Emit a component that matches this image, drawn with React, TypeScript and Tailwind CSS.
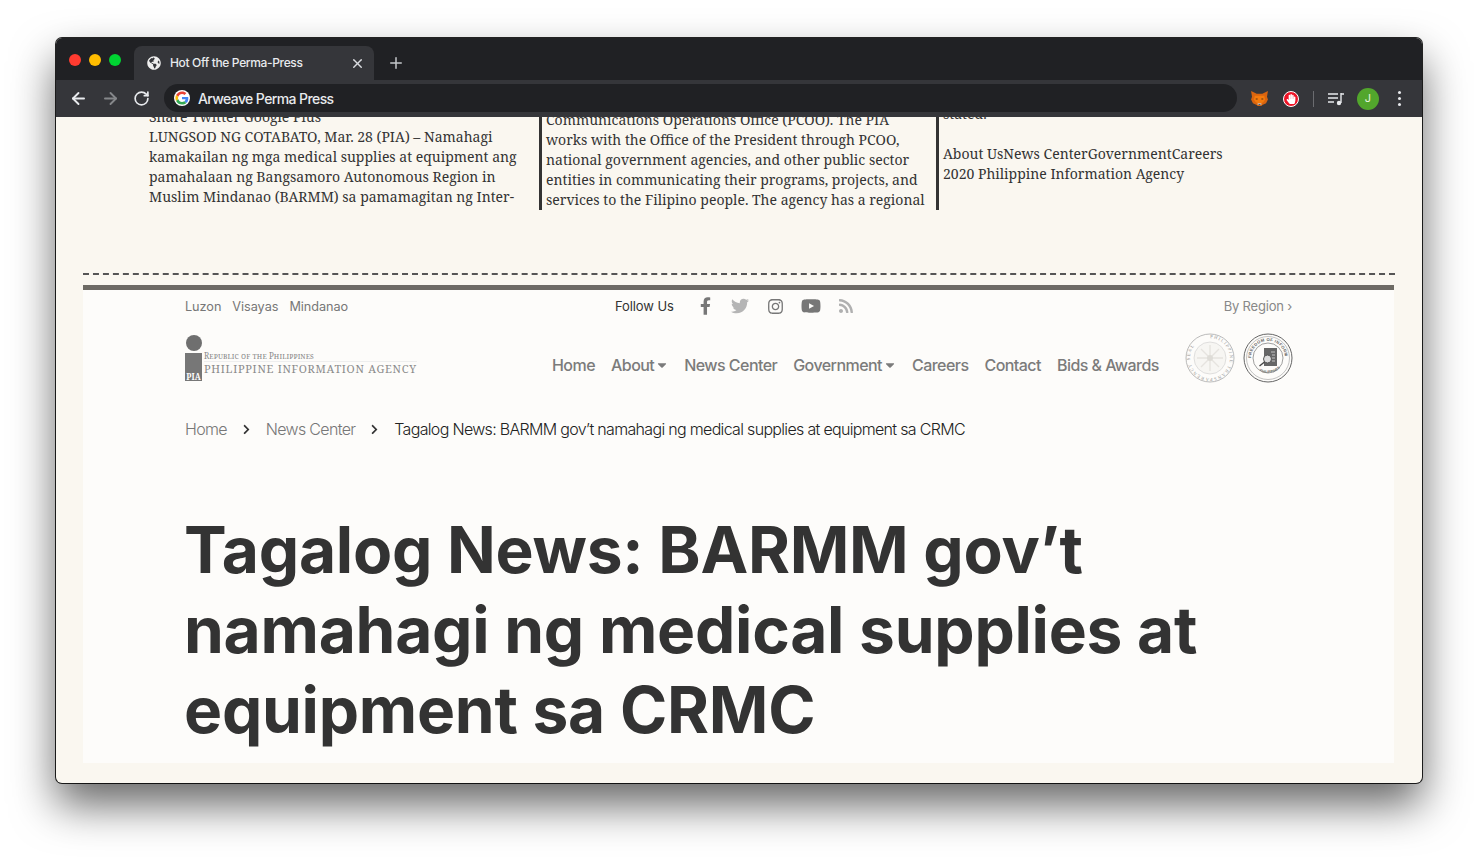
import { FaFacebookF, FaTwitter, FaInstagram, FaYoutube, FaRss, FaGlobeAmericas, FaHandPaper, FaCaretDown, FaChevronRight } from "react-icons/fa";
import { ArrowLeft, ArrowRight, RotateCw, X, Plus } from "lucide-react";

const serif = "[font-family:'Noto_Serif','Liberation_Serif','DejaVu_Serif',serif]";

const GoogleG = () => (
  <svg viewBox="0 0 48 48" className="w-[16px] h-[16px]">
    <circle cx="24" cy="24" r="24" fill="#fff" />
    <path fill="#EA4335" d="M24 12c3.1 0 5.6 1.1 7.6 2.9l5.6-5.6C33.7 6.100 29.300 4.200 24 4.200 16.300 4.200 9.600 8.600 6.300 15.100l6.600 5.100C14.500 15.400 18.900 12 24 12z" />
    <path fill="#4285F4" d="M43 24.500c0-1.400-.1-2.400-.4-3.500H24v7.100h10.800c-.5 2.500-1.900 4.600-4.100 6l6.400 5C40.800 36.300 43 30.900 43 24.500z" />
    <path fill="#FBBC05" d="M12.900 28.800c-.4-1.300-.7-2.700-.7-4.100 0-1.400.2-2.900.7-4.500l-6.600-5.100C4.900 18 4.200 21 4.200 24s.7 6 2.100 8.900l6.600-5.100z" />
    <path fill="#34A853" d="M24 43.800c5.300 0 9.800-1.700 13-4.700l-6.400-5c-1.700 1.200-4 2-6.600 2-5.100 0-9.500-3.400-11.100-8.300l-6.600 5.100C9.600 39.400 16.300 43.800 24 43.800z" />
  </svg>
);

const Fox = () => (
  <svg viewBox="0 0 18 16" className="w-[17px] h-[15px]">
    <path fill="#d9640f" d="M0 0l6 3h6l6-3-1 6 1 3-2 4-4 2-1 1H7l-1-1-4-2-2-4 1-3z" />
    <path fill="#f47a0c" d="M4 5h10l1 4-2 3-4 2-4-2-2-3z" />
    <path fill="#5e3413" d="M5 8h2v1H5zM11 8h2v1h-2z" />
    <path fill="#cdbfb2" d="M7 13h4v2H7z" />
    <path fill="#233447" d="M8 14h2v1H8z" />
  </svg>
);

const Logo = () => (
  <div className="flex items-end">
    <div className="w-[17px] flex flex-col items-center">
      <div className="w-[16px] h-[16px] rounded-full bg-[#6f6f6f] mb-[2px]" />
      <div className="w-[17px] h-[28px] bg-[#777] flex items-end justify-center">
        <span className={`text-[8px] leading-[9px] font-bold text-white ${serif}`}>PIA</span>
      </div>
    </div>
    <div className={`ml-[2px] mb-[5px] text-[#8b8b8b] ${serif} whitespace-nowrap`}>
      <div className="text-[8px] leading-[10px] tracking-[0.1px] [font-variant:small-caps] border-b border-[#eee]">
        Republic of the Philippines
      </div>
      <div className="text-[11px] leading-[14px] tracking-[0.72px]">PHILIPPINE INFORMATION AGENCY</div>
    </div>
  </div>
);

const TransparencySeal = () => (
  <svg viewBox="0 0 50 50" className="w-[50px] h-[50px]">
    <circle cx="25" cy="25" r="24" fill="#fdfcfa" stroke="#aaa" strokeWidth="0.8" />
    <circle cx="25" cy="25" r="16" fill="#f7f6f3" stroke="#ccc" strokeWidth="0.6" />
    <path id="sealA" d="M25 5a20 20 0 1 1-.1 0" fill="none" />
    <text fontSize="4.6" fill="#999" fontFamily="Liberation Serif, serif" letterSpacing="1.2">
      <textPath href="#sealA">PHILIPPINE TRANSPARENCY SEAL</textPath>
    </text>
    <path d="M25 12v26M12 25h26M16 16l18 18M34 16L16 34" stroke="#e6e4df" strokeWidth="1.4" />
    <circle cx="25" cy="25" r="3" fill="#dedcd7" />
  </svg>
);

const FoiSeal = () => (
  <svg viewBox="0 0 50 50" className="w-[50px] h-[50px]">
    <circle cx="25" cy="25" r="24" fill="#fdfcfa" stroke="#666" strokeWidth="1" />
    <circle cx="25" cy="25" r="21.500" fill="none" stroke="#888" strokeWidth="0.5" />
    <circle cx="25" cy="25" r="15" fill="none" stroke="#777" strokeWidth="0.7" />
    <path id="sealB" d="M8 25a17 17 0 1 1 34 0" fill="none" />
    <text fontSize="4.200" fill="#666" fontFamily="Liberation Sans, sans-serif" fontWeight="700" letterSpacing="0.35">
      <textPath href="#sealB">FREEDOM OF INFORMATION</textPath>
    </text>
    <path id="sealC" d="M12 34a17 17 0 0 0 26 0" fill="none" />
    <text fontSize="3.500" fill="#666" fontFamily="Liberation Sans, sans-serif" fontWeight="700">
      <textPath href="#sealC" startOffset="6">PHILIPPINES</textPath>
    </text>
    <path fill="#666" d="M21 15h13v18H21z" />
    <path stroke="#ddd" strokeWidth="0.8" d="M28 19h4M29 22h3M29 25h3M29 28h3" />
    <circle cx="24.500" cy="26" r="4" fill="#ddd" stroke="#555" strokeWidth="1" />
    <path stroke="#444" strokeWidth="1.500" d="M21.500 29l-5 4" />
  </svg>
);

const navItems = [
  { label: "Home" },
  { label: "About", caret: true },
  { label: "News Center" },
  { label: "Government", caret: true },
  { label: "Careers" },
  { label: "Contact" },
  { label: "Bids & Awards" },
];

export default function App() {
  return (
    <div className="h-[857px] w-[1478px] bg-white overflow-hidden pt-[38px] pl-[56px] [font-family:Inter,sans-serif]">
      <div className="w-[1366px] h-[745px] rounded-[6px] overflow-hidden flex flex-col shadow-[0_22px_44px_rgba(0,0,0,0.6),0_0_0_1px_rgba(0,0,0,0.85)] bg-[#faf7f0]">
        {/* tab strip */}
        <div className="h-[42px] bg-[#202124] flex items-end shrink-0">
          <div className="flex gap-[8px] pl-[13px] pb-[14px] w-[78px] shrink-0">
            <span className="w-[12px] h-[12px] rounded-full bg-[#ff3b30]" />
            <span className="w-[12px] h-[12px] rounded-full bg-[#ffbd00]" />
            <span className="w-[12px] h-[12px] rounded-full bg-[#00d432]" />
          </div>
          <div className="w-[240px] h-[34px] bg-[#35363a] rounded-t-[8px] flex items-center pl-[13px] pr-[9px] text-white">
            <FaGlobeAmericas className="w-[14px] h-[14px] text-[#eee] shrink-0" />
            <span className="ml-[9px] text-[12px] font-medium tracking-[-0.35px] text-[#e8eaed] flex-1">Hot Off the Perma-Press</span>
            <X className="w-[15px] h-[15px] text-[#dadce0]" strokeWidth={2.2} />
          </div>
          <div className="h-[34px] flex items-center pl-[13px]">
            <Plus className="w-[18px] h-[18px] text-[#c4c7ca]" strokeWidth={2} />
          </div>
        </div>
        {/* address bar */}
        <div className="h-[37px] bg-[#35363a] flex items-center shrink-0 text-white">
          <div className="flex items-center pl-[13px] gap-[13px] w-[108px] shrink-0">
            <ArrowLeft className="w-[19px] h-[19px] text-[#e8eaed]" strokeWidth={2.4} />
            <ArrowRight className="w-[19px] h-[19px] text-[#85878a]" strokeWidth={2.4} />
            <RotateCw className="w-[17px] h-[17px] text-[#e8eaed]" strokeWidth={2.4} />
          </div>
          <div className="w-[1073px] h-[28px] -mt-[1px] rounded-full bg-[#202124] flex items-center pl-[10px] gap-[8px]">
            <GoogleG />
            <span className="text-[14px] font-medium tracking-[-0.6px] text-[#e8eaed]">Arweave Perma Press</span>
          </div>
          <div className="flex items-center flex-1 pl-[14px]">
            <Fox />
            <span className="ml-[15px] w-[16px] h-[16px] rounded-full bg-[#ee1427] border-[1.5px] border-white flex items-center justify-center">
              <FaHandPaper className="w-[10px] h-[10px] text-white" />
            </span>
            <span className="ml-[14px] w-px h-[16px] bg-[#6b6c70]" />
            <svg viewBox="0 0 16 14" className="ml-[14px] w-[16px] h-[14px]" fill="none" stroke="#e8eaed" strokeWidth="1.400">
              <path d="M0 2h10M0 6h10M0 10h6M13 2h3M13 1v10" />
              <circle cx="11" cy="11" r="2.200" fill="#e8eaed" stroke="none" />
            </svg>
            <span className="ml-[13px] w-[22px] h-[22px] rounded-full bg-[#52a62c] text-[11px] text-[#e6f3df] flex items-center justify-center">J</span>
            <span className="ml-[19px] flex flex-col gap-[3px]">
              <i className="w-[3px] h-[3px] rounded-full bg-[#e8eaed]" />
              <i className="w-[3px] h-[3px] rounded-full bg-[#e8eaed]" />
              <i className="w-[3px] h-[3px] rounded-full bg-[#e8eaed]" />
            </span>
          </div>
        </div>
        {/* page */}
        <div className="flex-1 overflow-hidden">
          {/* previous article's columns, scrolled under the toolbar */}
          <div className={`h-[93px] overflow-hidden flex text-[14px] leading-[20px] text-[#333] ${serif}`}>
            <div className="w-[483px] pl-[93px] pr-[20px] -mt-[10px] shrink-0 whitespace-nowrap">
              <p>Share Twitter Google Plus</p>
              <p>LUNGSOD NG COTABATO, Mar. 28 (PIA) – Namahagi</p>
              <p>kamakailan ng mga medical supplies at equipment ang</p>
              <p>pamahalaan ng Bangsamoro Autonomous Region in</p>
              <p>Muslim Mindanao (BARMM) sa pamamagitan ng Inter-</p>
            </div>
            <div className="w-[397px] shrink-0 border-l-[3px] border-[#333] pl-[4px] whitespace-nowrap">
              <div className="-mt-[7px]">
                <p>Communications Operations Office (PCOO). The PIA</p>
                <p>works with the Office of the President through PCOO,</p>
                <p>national government agencies, and other public sector</p>
                <p>entities in communicating their programs, projects, and</p>
                <p>services to the Filipino people. The agency has a regional</p>
              </div>
            </div>
            <div className="flex-1 border-l-[3px] border-[#333] pl-[4px] whitespace-nowrap">
              <div className="-mt-[13px]">
                <p>stated.</p>
                <p>&nbsp;</p>
                <p>About UsNews CenterGovernmentCareers</p>
                <p>2020 Philippine Information Agency</p>
              </div>
            </div>
          </div>
          <div className="mx-[27px] mt-[63px]">
            <div className="border-t-2 border-dashed border-[#555] h-[12px]" />
            <div className="bg-[#fdfcfa] border-t-[5px] border-[#6d6a64] w-[1311px] h-[478px] overflow-hidden pl-[102px] pr-[102px]">
              {/* top strip */}
              <div className="h-[33px] flex items-center text-[13px] text-[#777]">
                <div className="flex gap-[11px] w-[430px] text-[12.7px] tracking-[-0.05px]">
                  <span>Luzon</span>
                  <span>Visayas</span>
                  <span>Mindanao</span>
                </div>
                <span className="text-[#333] tracking-[-0.1px]">Follow Us</span>
                <div className="flex items-center ml-[26px] -mt-[1px] text-[#777]">
                  <FaFacebookF className="w-[11px] h-[18px]" />
                  <FaTwitter className="ml-[20px] w-[18px] h-[18px] text-[#b5b5b5]" />
                  <FaInstagram className="ml-[18px] w-[17px] h-[17px]" />
                  <FaYoutube className="ml-[17px] w-[20px] h-[20px]" />
                  <FaRss className="ml-[17px] w-[16px] h-[16px] text-[#b0b0b0]" />
                </div>
                <span className="ml-auto text-[#888] tracking-[-0.2px]">By Region ›</span>
              </div>
              {/* brand + nav */}
              <div className="h-[70px] flex items-center">
                <div className="w-[367px] shrink-0">
                  <Logo />
                </div>
                <nav className="flex items-center mt-[13px] gap-[16px] text-[16px] font-medium tracking-[-0.55px] text-[#7b7b7b] whitespace-nowrap">
                  {navItems.map((item) => (
                    <span key={item.label} className="flex items-center">
                      {item.label}
                      {item.caret && <FaCaretDown className="w-[14px] h-[14px] -mr-[1px] ml-[1px]" />}
                    </span>
                  ))}
                </nav>
                <div className="ml-auto -mr-[1px] flex items-center gap-[8px]">
                  <TransparencySeal />
                  <FoiSeal />
                </div>
              </div>
              {/* breadcrumb */}
              <div className="mt-[24px] flex items-center text-[16px] font-[350] tracking-[-0.68px] text-[#777] whitespace-nowrap h-[24px]">
                <span>Home</span>
                <FaChevronRight className="ml-[14px] mr-[14px] w-[11px] h-[11px] text-[#333]" />
                <span>News Center</span>
                <FaChevronRight className="ml-[14px] mr-[14px] w-[11px] h-[11px] text-[#333]" />
                <span className="text-[#222]">Tagalog News: BARMM gov’t namahagi ng medical supplies at equipment sa CRMC</span>
              </div>
              <h1 className="mt-[69px] -ml-[1px] text-[64px] leading-[80px] font-bold text-[#333] tracking-[-0.25px]">
                Tagalog News: BARMM gov’t namahagi ng medical supplies at equipment sa CRMC
              </h1>
            </div>
          </div>
        </div>
      </div>
    </div>
  );
}
